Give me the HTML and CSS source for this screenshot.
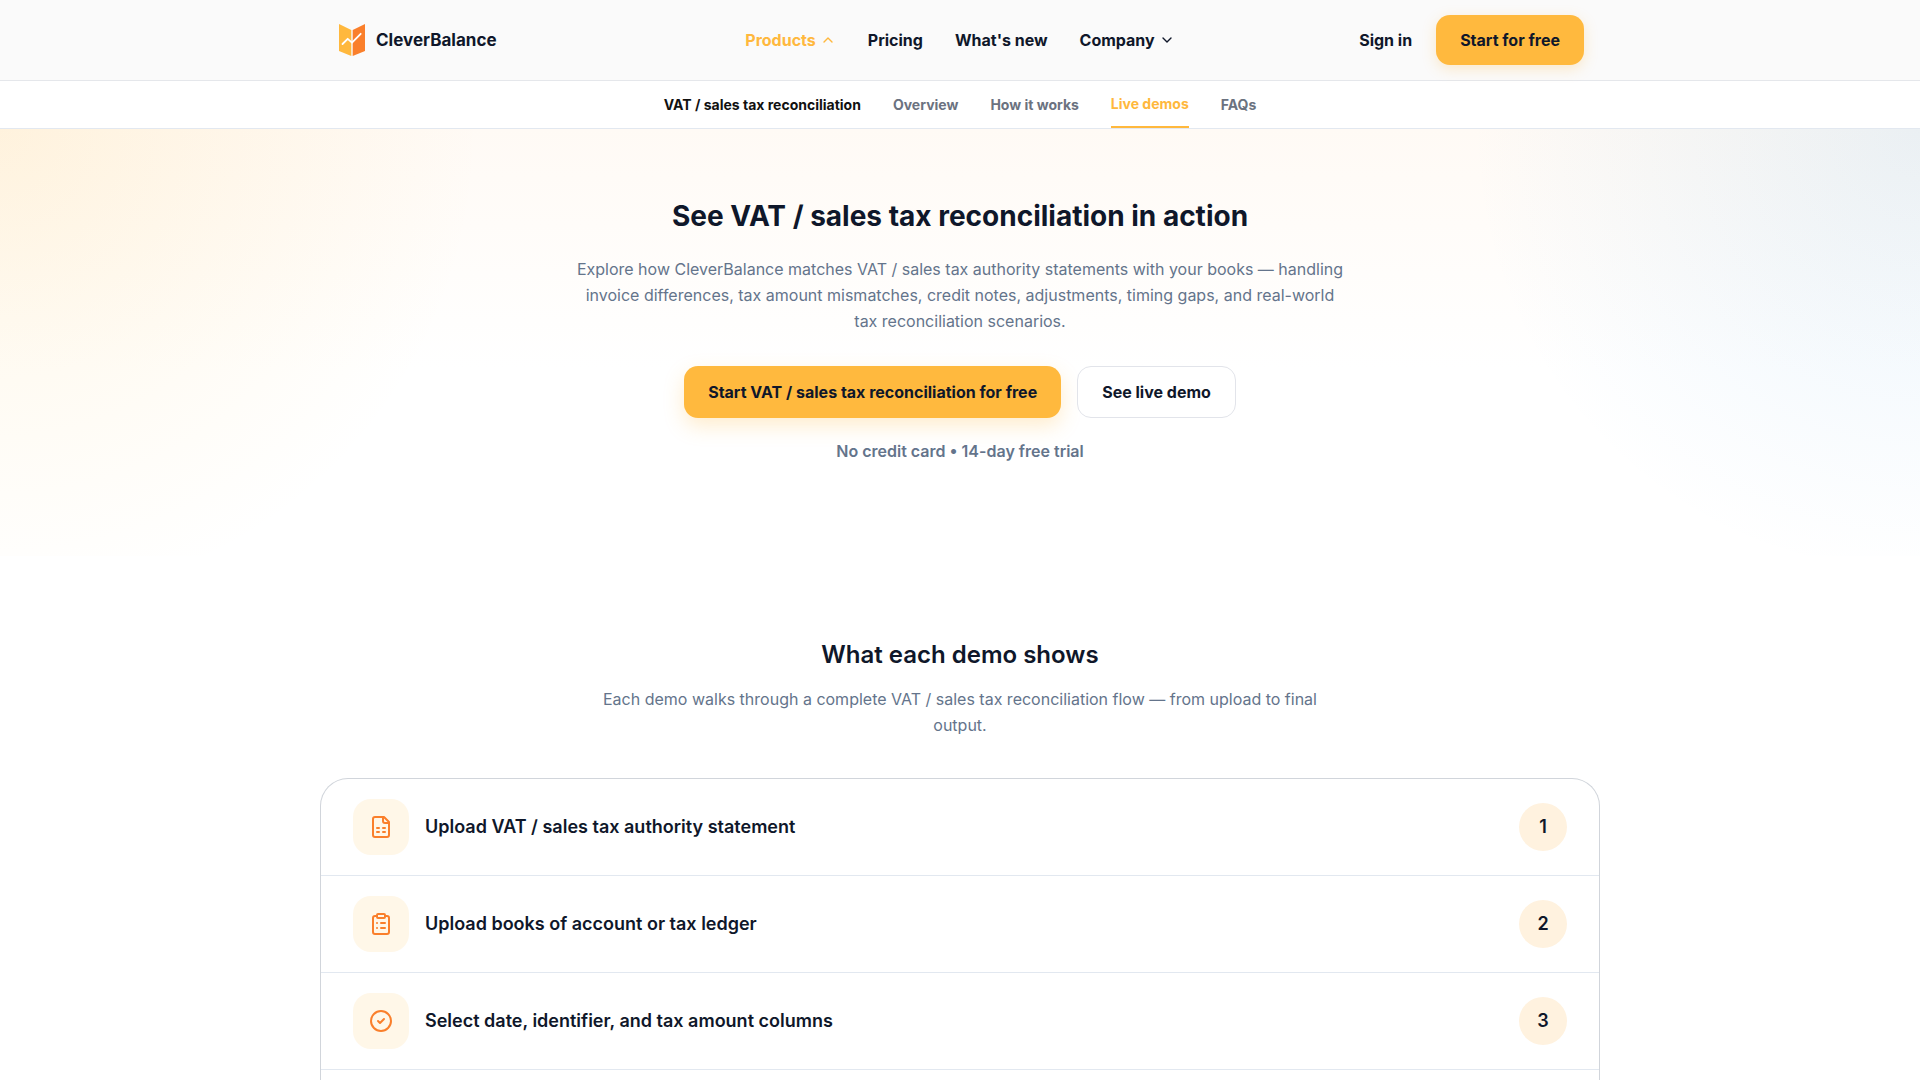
FILE: index.html
```html
<!DOCTYPE html>
<html lang="en">
<head>
    <meta charset="UTF-8">
    <meta name="viewport" content="width=device-width, initial-scale=1.0">
    <title>CleverBalance</title>
    <link rel="stylesheet" href="styles.css">
</head>
<body>
    <header class="header">
        <div class="header-inner">
            <a href="#" class="logo">
                <svg class="logo-mark" viewBox="0 0 26 32">
                    <path fill="#ffb83d" d="M0 0l12.3 6v26L0 27z"/>
                    <path fill="#fa7f2b" d="M26 0L13.7 6v26L26 27z"/>
                    <path fill="none" stroke="#fff" stroke-width="1.8" stroke-linecap="round" stroke-linejoin="round" d="M3.5 20l5.2-5.2 4.3 3.9 8.7-8.9"/>
                </svg>
                <span>CleverBalance</span>
            </a>
            <nav class="nav">
                <a href="#" class="nav-link active">Products
                    <svg class="chevron" viewBox="0 0 16 16"><path d="M4 10l4-4 4 4"/></svg>
                </a>
                <a href="#" class="nav-link">Pricing</a>
                <a href="#" class="nav-link">What's new</a>
                <a href="#" class="nav-link">Company
                    <svg class="chevron" viewBox="0 0 16 16"><path d="M4 6l4 4 4-4"/></svg>
                </a>
            </nav>
            <div class="header-actions">
                <a href="#" class="nav-link">Sign in</a>
                <button type="button" class="btn btn-primary btn-header">Start for free</button>
            </div>
        </div>
    </header>

    <nav class="subnav">
        <span class="subnav-title">VAT / sales tax reconciliation</span>
        <a href="#" class="subnav-link">Overview</a>
        <a href="#" class="subnav-link">How it works</a>
        <a href="#demos" class="subnav-link active">Live demos</a>
        <a href="#" class="subnav-link">FAQs</a>
    </nav>

    <section class="hero">
        <h1>See VAT / sales tax reconciliation in action</h1>
        <p class="lead">Explore how CleverBalance matches VAT / sales tax authority statements with your books — handling invoice differences, tax amount mismatches, credit notes, adjustments, timing gaps, and real-world tax reconciliation scenarios.</p>
        <div class="hero-actions">
            <button type="button" class="btn btn-primary">Start VAT / sales tax reconciliation for free</button>
            <button type="button" class="btn btn-outline">See live demo</button>
        </div>
        <p class="hero-note">No credit card • 14-day free trial</p>
    </section>

    <section class="demos" id="demos">
        <h2>What each demo shows</h2>
        <p class="lead">Each demo walks through a complete VAT / sales tax reconciliation flow — from upload to final output.</p>
        <ol class="steps">
            <li class="step">
                <span class="step-icon">
                    <svg viewBox="0 0 24 24">
                        <path d="M15 2H6a2 2 0 0 0-2 2v16a2 2 0 0 0 2 2h12a2 2 0 0 0 2-2V7z"/>
                        <path d="M14 2v4a2 2 0 0 0 2 2h4M8 13h2M14 13h2M8 17h2M14 17h2"/>
                    </svg>
                </span>
                <span class="step-text">Upload VAT / sales tax authority statement</span>
                <span class="step-number">1</span>
            </li>
            <li class="step">
                <span class="step-icon">
                    <svg viewBox="0 0 24 24">
                        <rect x="8" y="2" width="8" height="4" rx="1"/>
                        <path d="M16 4h2a2 2 0 0 1 2 2v14a2 2 0 0 1-2 2H6a2 2 0 0 1-2-2V6a2 2 0 0 1 2-2h2"/>
                        <path d="M12 11h4M12 16h4M8 11h.01M8 16h.01"/>
                    </svg>
                </span>
                <span class="step-text">Upload books of account or tax ledger</span>
                <span class="step-number">2</span>
            </li>
            <li class="step">
                <span class="step-icon">
                    <svg viewBox="0 0 24 24">
                        <circle cx="12" cy="12" r="10"/>
                        <path d="M9 12l2 2 4-4"/>
                    </svg>
                </span>
                <span class="step-text">Select date, identifier, and tax amount columns</span>
                <span class="step-number">3</span>
            </li>
        </ol>
    </section>
</body>
</html>
```

FILE: styles.css
```css
* {
    box-sizing: border-box;
    margin: 0;
    padding: 0;
}
body {
    display: flex;
    flex-direction: column;
    min-height: 100vh;
    font-family: Inter, "Liberation Sans", sans-serif;
    font-size: 16px;
    line-height: 26px;
    color: #0f172a;
    background: #fff;
}
a {
    color: inherit;
    text-decoration: none;
}

/* Header */
.header {
    position: relative;
    background: #fafafa;
    border-bottom: 1px solid #e5e7eb;
}
.header-inner {
    display: grid;
    grid-template-columns: 1fr auto 1fr;
    align-items: center;
    max-width: 1280px;
    min-height: 80px;
    margin: 0 auto;
    padding: 0 16px;
}
.logo {
    display: flex;
    align-items: center;
    gap: 11px;
    padding-left: 3px;
    font-size: 17px;
    font-weight: 700;
}
.logo-mark {
    width: 26px;
    height: 32px;
}
.nav {
    display: flex;
    gap: 32px;
}
.nav-link {
    display: flex;
    align-items: center;
    gap: 4px;
    font-weight: 700;
}
.nav-link.active {
    color: #ffb83d;
}
.chevron {
    width: 16px;
    height: 16px;
    fill: none;
    stroke: currentColor;
    stroke-width: 1.4;
    stroke-linecap: round;
    stroke-linejoin: round;
}
.header-actions {
    display: flex;
    align-items: center;
    justify-content: flex-end;
    gap: 24px;
}

/* Buttons */
.btn {
    height: 52px;
    padding: 0 24px;
    border: none;
    border-radius: 14px;
    font: inherit;
    font-weight: 700;
    color: #0f172a;
    cursor: pointer;
}
.btn-primary {
    background: #ffb93e;
    box-shadow: 0 8px 20px rgba(255, 184, 61, 0.25);
}
.btn-header {
    height: 50px;
    box-shadow: 0 4px 14px rgba(255, 184, 61, 0.25);
}
.btn-outline {
    background: #fff;
    border: 1px solid #e2e4ea;
}

/* Sub navigation */
.subnav {
    display: flex;
    justify-content: center;
    gap: 32px;
    min-height: 48px;
    border-bottom: 1px solid #e2e8f0;
    background: #fff;
    font-size: 14px;
    font-weight: 700;
}
.subnav-title,
.subnav-link {
    display: flex;
    align-items: center;
}
.subnav-title {
    color: #111;
}
.subnav-link {
    color: #6b7280;
}
.subnav-link.active {
    color: #ffb83d;
    border-bottom: 2px solid #ffb83d;
}

/* Hero */
.hero {
    padding: 67px 16px 92px;
    text-align: center;
    background:
        radial-gradient(circle 480px at 0 0, rgba(255, 190, 61, 0.13), transparent),
        radial-gradient(circle 450px at 100% 0, rgba(56, 150, 225, 0.1), transparent),
        linear-gradient(#fffaf5, #fff 240px);
}
h1 {
    font-size: 28px;
    line-height: 40px;
    font-weight: 700;
}
.lead {
    max-width: 768px;
    margin: 20px auto 0;
    color: #64748b;
}
.hero-actions {
    display: flex;
    justify-content: center;
    gap: 16px;
    margin-top: 32px;
}
.hero-note {
    margin-top: 20px;
    font-weight: 600;
    color: #64748b;
}

/* Demo steps */
.demos {
    display: flex;
    flex: 1;
    flex-direction: column;
    width: 100%;
    max-width: 1280px;
    margin: 0 auto;
    padding-top: 84px;
    text-align: center;
}
h2 {
    font-size: 24px;
    line-height: 30px;
    font-weight: 600;
}
.demos .lead {
    margin-top: 16px;
    max-width: 720px;
}
.steps {
    flex: 1;
    margin-top: 40px;
    border: 1px solid #d1d5db;
    border-bottom: none;
    border-radius: 28px 28px 0 0;
    list-style: none;
    text-align: left;
}
.step {
    display: flex;
    align-items: center;
    gap: 16px;
    padding: 20px 32px;
    border-bottom: 1px solid #e2e8f0;
    font-size: 18px;
    font-weight: 600;
}
.step-icon {
    display: grid;
    place-items: center;
    width: 56px;
    height: 56px;
    border-radius: 18px;
    background: #fff7e8;
}
.step-icon svg {
    width: 24px;
    height: 24px;
    fill: none;
    stroke: #fa7f2b;
    stroke-width: 2;
    stroke-linecap: round;
    stroke-linejoin: round;
}
.step-text {
    flex: 1;
}
.step-number {
    display: grid;
    place-items: center;
    width: 48px;
    height: 48px;
    border-radius: 50%;
    background: #fff2df;
}
```
